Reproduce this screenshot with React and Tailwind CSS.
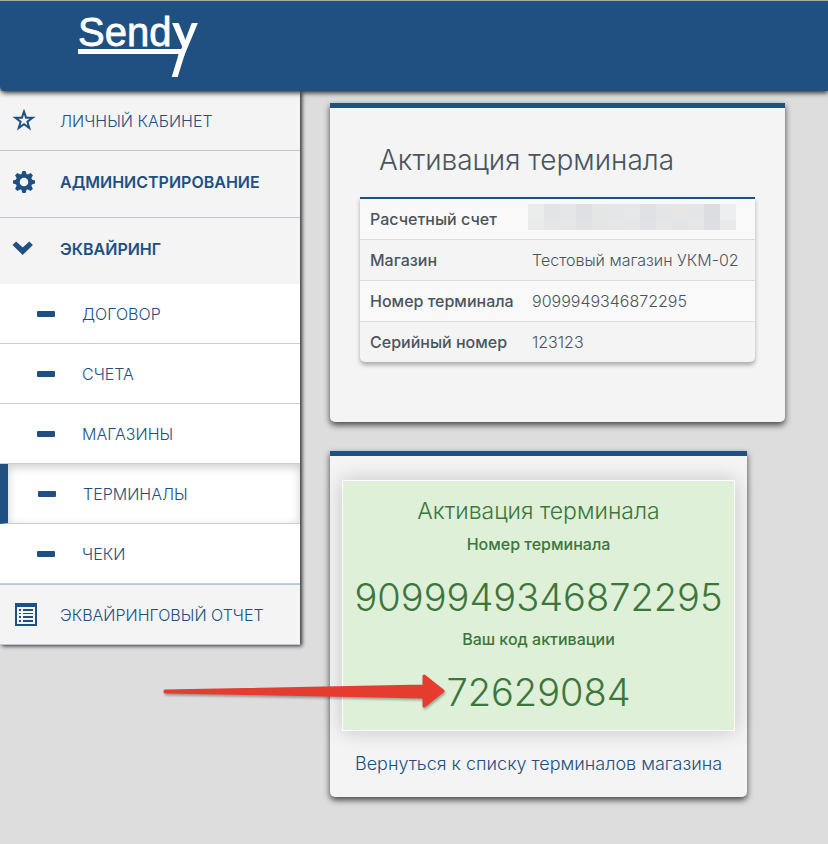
import clsx from 'clsx';

const StarIcon = () => (
  <svg width="24" height="24" viewBox="0 1 24 24" fill="none" stroke="#205081" strokeWidth="2" aria-hidden="true">
    <path d="M12 3.6 L14.1 9.7 L20.6 9.8 L15.4 13.7 L17.3 20 L12 16.3 L6.7 20 L8.6 13.7 L3.4 9.8 L9.9 9.7 Z" />
  </svg>
);

const TEETH = [0, 45, 90, 135, 180, 225, 270, 315];

const CogIcon = () => (
  <svg width="24" height="24" viewBox="0 0 24 24" fill="#205081" aria-hidden="true">
    {TEETH.map((angle) => (
      <path key={angle} d="M9.2 5 L10.4 1 H13.6 L14.8 5 Z" transform={`rotate(${angle} 12 12)`} />
    ))}
    <circle cx="12" cy="12" r="6.3" fill="none" stroke="#205081" strokeWidth="4" />
  </svg>
);

const ChevronIcon = () => (
  <svg width="24" height="24" viewBox="0 0 24 24" fill="#205081" aria-hidden="true">
    <path d="M0.5 8 L4.1 4.4 L10.7 10.6 L17.3 4.4 L20.9 8 L10.7 18 Z" />
  </svg>
);

const ListIcon = () => (
  <svg width="24" height="24" viewBox="-2 0 24 24" className="overflow-visible" fill="#205081" aria-hidden="true">
    <path fillRule="evenodd" d="M1 0 H23 V23 H1 Z M3 4 V21 H21 V4 Z" />
    <path d="M5 6h2v2H5z M9 6h10v2H9z M5 10h2v1H5z M9 10h10v1H9z M5 13h2v2H5z M9 13h10v2H9z M5 17h2v2H5z M9 17h10v2H9z" />
  </svg>
);

const MENU = [
  { label: 'ЛИЧНЫЙ КАБИНЕТ', icon: StarIcon, className: 'h-[60px] border-b border-[#b9c9d8] font-light' },
  { label: 'АДМИНИСТРИРОВАНИЕ', icon: CogIcon, className: 'h-[67px] border-b border-[#b9c9d8] pb-1 font-semibold' },
  {
    label: 'ЭКВАЙРИНГ',
    icon: ChevronIcon,
    className: 'h-[66px] pb-1 font-semibold',
    items: [
      { label: 'ДОГОВОР' },
      { label: 'СЧЕТА' },
      { label: 'МАГАЗИНЫ' },
      { label: 'ТЕРМИНАЛЫ', active: true },
      { label: 'ЧЕКИ' },
    ],
  },
  { label: 'ЭКВАЙРИНГОВЫЙ ОТЧЕТ', icon: ListIcon, className: 'h-[61px] border-y border-[#b9c9d8] font-light' },
];

// Masked account number, two rows of grey cells
const MASK = [
  ['#ebeded', '#e3e4e6', '#e5e6e7', '#dfe0e3', '#e4e5e5', '#e5e6e7', '#e6e7e8', '#e0e1e4', '#e4e5e7', '#e6e6e6', '#e3e5e7', '#dcdde0', '#edeef0'],
  ['#e8ebea', '#e5e6e8', '#e6e7e7', '#e0e2e4', '#e5e5e5', '#e6e7e8', '#e4e6e7', '#e1e2e5', '#e4e6e7', '#e3e4e6', '#e6e7e8', '#dedfe2', '#e7e9ea'],
];

const MaskedAccount = () => (
  <svg className="-ml-1 mb-1" width="208" height="26" role="img" aria-label="Скрыто">
    {MASK.map((row, y) =>
      row.map((color, x) => <rect key={`${x}-${y}`} x={x * 16} y={y * 16} width="16" height="16" fill={color} />)
    )}
  </svg>
);

const ROWS = [
  { name: 'Расчетный счет', value: <MaskedAccount /> },
  { name: 'Магазин', value: 'Тестовый магазин УКМ-02' },
  { name: 'Номер терминала', value: '9099949346872295' },
  { name: 'Серийный номер', value: '123123' },
];

const Logo = () => (
  <svg width="130" height="76" viewBox="0 0 130 76" className="overflow-visible" fill="#fff" role="img" aria-label="Sendy">
    <text x="0" y="32" fontSize="40" fontFamily="Liberation Sans, sans-serif" stroke="#fff" strokeWidth="0.8">Send</text>
    <text x="94" y="35" fontSize="49" fontFamily="Lato, sans-serif" fontWeight="700">y</text>
    <rect x="0" y="35" width="106" height="5" />
    <path d="M102 36 H108 L99.7 63 H93.7 Z" />
  </svg>
);

const Arrow = () => (
  <svg
    className="pointer-events-none absolute top-1/2 -left-[181px] -translate-y-1/2 drop-shadow-[1px_2px_1px_rgba(0,0,0,0.3)]"
    width="284"
    height="40"
    viewBox="0 0 284 40"
    aria-hidden="true"
  >
    <path
      d="M3 21 L262 16 V6 L281 21 L262 36 V27 L3 22 Z"
      fill="#e63c30"
      stroke="#e63c30"
      strokeWidth="3"
      strokeLinejoin="round"
    />
  </svg>
);

const Sidebar = () => (
  <nav className="w-[300px] shrink-0 bg-[#f4f4f4] text-base text-[#205081] shadow-[2px_1px_4px_rgba(0,0,0,0.8)]">
    <ul>
      {MENU.map(({ label, icon: Icon, className, items }) => (
        <li key={label}>
          <a href="#" className={clsx('flex items-center gap-6 pl-3', className)}>
            <Icon />
            {label}
          </a>
          {items && (
            <ul>
              {items.map((item) => (
                <li key={item.label}>
                  <a
                    href="#"
                    className={clsx(
                      'flex h-[60px] items-center gap-[27px] border-b border-b-[#c3d0dc] bg-white font-light',
                      item.active
                        ? 'border-l-8 border-l-[#205081] pl-[30px] shadow-[inset_0_3px_10px_rgba(0,0,0,0.2)]'
                        : 'pl-[37px]'
                    )}
                  >
                    <span className="h-[6px] w-[18px] rounded-[1px] bg-[#205081]" />
                    {item.label}
                  </a>
                </li>
              ))}
            </ul>
          )}
        </li>
      ))}
    </ul>
  </nav>
);

const Card = ({ className, children }) => (
  <section
    className={clsx(
      'w-full rounded-b-[5px] border-t-[5px] border-[#205081] bg-[#f4f4f4] shadow-[0_3px_6px_rgba(0,0,0,0.7)]',
      className
    )}
  >
    {children}
  </section>
);

export default function App() {
  return (
    <div className="min-h-screen bg-[#ddd] font-['Inter','Noto_Sans',sans-serif] text-[#4b545c]">
      <header className="relative z-10 flex h-[91px] rounded-bl-[5px] border-t border-[#aaa] bg-[#205081] pt-[13px] pl-[78px] shadow-[0_2px_5px_rgba(0,0,0,0.8)]">
        <a href="#">
          <Logo />
        </a>
      </header>

      <div className="flex items-start">
        <Sidebar />

        <main className="flex min-w-0 flex-1 flex-col gap-[29px] py-3 pr-4 pl-[30px]">
          <Card className="max-w-[455px] px-[30px] pt-8 pb-[60px]">
            <h1 className="mb-[17px] pl-[19px] text-[28px] leading-10 font-light">Активация терминала</h1>
            <div className="overflow-hidden rounded-b-[5px] border-t-2 border-[#205081] shadow-[0_3px_4px_rgba(0,0,0,0.3)]">
              <table className="w-full text-left text-base leading-5">
                <tbody>
                  {ROWS.map((row) => (
                    <tr key={row.name} className="h-[41px] border-b border-[#ddd] first:h-10 odd:bg-[#f9f9f9] last:border-b-0">
                      <th scope="row" className="w-[162px] pl-[10px] font-medium whitespace-nowrap">{row.name}</th>
                      <td className="pl-[10px] font-light whitespace-nowrap">{row.value}</td>
                    </tr>
                  ))}
                </tbody>
              </table>
            </div>
          </Card>

          <Card className="max-w-[417px] px-3 pt-6 pb-[20px] text-center">
            <div className="border border-white bg-[#dff0d8] pt-[14px] pb-[6px] text-[#3c763d] shadow-[0_0_20px_rgba(0,0,0,0.2)]">
              <h2 className="text-[23px] leading-8 font-light">Активация терминала</h2>
              <p className="pt-[7px] text-base leading-5 font-medium">Номер терминала</p>
              <p className="mt-[6px] pt-5 pb-[14px] text-[38px] leading-[35px] font-light">9099949346872295</p>
              <p className="text-base leading-5 font-medium">Ваш код активации</p>
              <p className="relative mt-[6px] pt-5 pb-[14px] text-[38px] leading-[35px] font-light">
                72629084
                <Arrow />
              </p>
            </div>
            <a href="#" className="mt-[20px] block text-lg leading-[26px] font-light text-[#205081]">
              Вернуться к списку терминалов магазина
            </a>
          </Card>
        </main>
      </div>
    </div>
  );
}
